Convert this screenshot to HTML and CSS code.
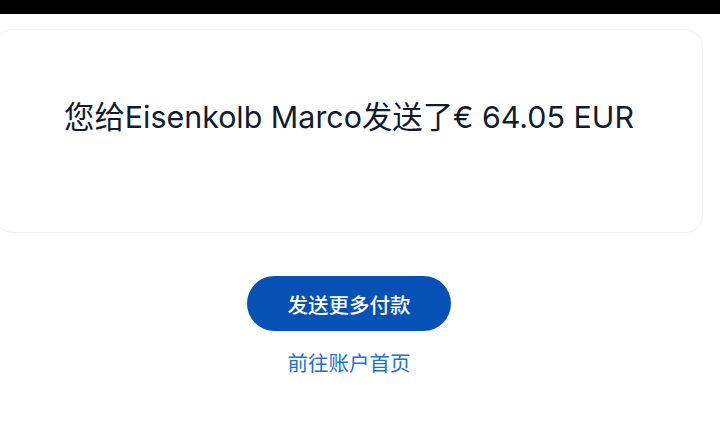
FILE: index.html
```html
<!DOCTYPE html>
<html lang="zh-CN">
<head>
<meta charset="utf-8">
<link rel="stylesheet" href="styles.css">
</head>
<body>
<div class="topbar"></div>
<main class="page">
  <section class="card">
    <h1 class="message">您给Eisenkolb Marco发送了€ 64.05 EUR</h1>
  </section>
  <button class="primary" type="button">发送更多付款</button>
  <a class="link" href="#">前往账户首页</a>
</main>
</body>
</html>
```
FILE: styles.css
```css
* { box-sizing: border-box; }
html, body { margin: 0; padding: 0; background: #ffffff; }
body {
  width: 720px;
  height: 424px;
  overflow: hidden;
  font-family: Inter, "Noto Sans CJK SC", sans-serif;
}
.topbar {
  height: 14px;
  background: #000000;
}
.page {
  margin: 15px 17px 0 -5px;
  display: flex;
  flex-direction: column;
  align-items: center;
}
.card {
  width: 100%;
  height: 204px;
  border: 1px solid #f1f2f4;
  border-radius: 18px;
  box-shadow: 0 1px 3px rgba(0,0,0,0.02);
  padding-top: 68px;
  display: flex;
  justify-content: center;
}
.message {
  margin: 0;
  font-weight: 400;
  font-size: 30.4px;
  line-height: 38px;
  color: #111b2e;
  white-space: nowrap;
}
.primary {
  margin-top: 43px;
  width: 204px;
  height: 55px;
  border: none;
  border-radius: 28px;
  background: #0551b5;
  color: #ffffff;
  font-family: inherit;
  font-size: 20.5px;
  font-weight: 500;
  cursor: pointer;
}
.link {
  margin-top: 20px;
  font-size: 20.5px;
  line-height: 25px;
  color: #2170d6;
  text-decoration: none;
}
```
